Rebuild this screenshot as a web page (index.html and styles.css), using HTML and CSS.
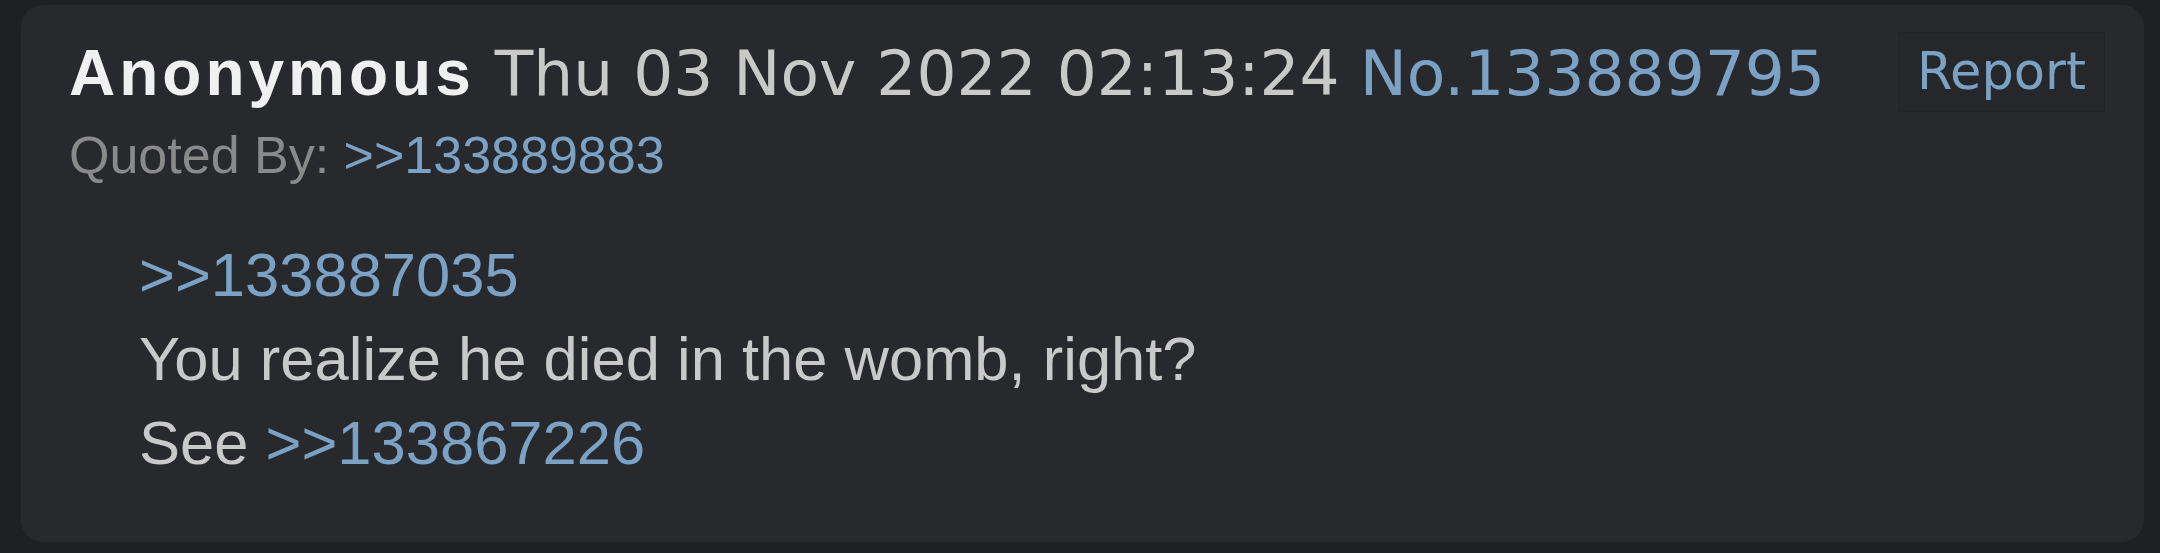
FILE: index.html
```html
<!DOCTYPE html>
<html lang="en">
<head>
  <meta charset="UTF-8">
  <meta name="viewport" content="width=device-width, initial-scale=1.0">
  <link rel="stylesheet" href="styles.css">
  <title>Post No.133889795</title>
</head>
<body>
  <div class="post">
    <div class="post-header">
      <div class="post-info">
        <span class="name">Anonymous</span>
        <span class="date">Thu 03 Nov 2022 02:13:24</span>
        <a class="post-no" href="#p133889795">No.133889795</a>
      </div>
      <a class="report" href="#report">Report</a>
    </div>
    <div class="backlinks">
      Quoted By: <a class="quotelink" href="#p133889883">&gt;&gt;133889883</a>
    </div>
    <blockquote class="post-body">
      <a class="quotelink" href="#p133887035">&gt;&gt;133887035</a><br>
      You realize he died in the womb, right?<br>
      See <a class="quotelink" href="#p133867226">&gt;&gt;133867226</a>
    </blockquote>
  </div>
</body>
</html>
```

FILE: styles.css
```css
html {
  background: #1f2022;
}
body {
  margin: 0;
  padding: 5px 16px 11px 21px;
  background: #1f2022;
  font-family: 'Liberation Sans', Arial, sans-serif;
  color: #c8c8c8;
}
a {
  color: #7ba2c4;
  text-decoration: none;
}
.post {
  background: #28292d;
  border-radius: 22px;
  height: 537px;
  box-sizing: border-box;
  padding: 31px 39px 0 48px;
}
.post-header {
  display: flex;
  justify-content: space-between;
  align-items: flex-start;
}
.post-info {
  font-family: 'DejaVu Sans', Verdana, sans-serif;
  font-size: 63px;
  line-height: 74px;
  white-space: nowrap;
}
.name {
  font-family: 'Liberation Sans', Arial, sans-serif;
  font-weight: bold;
  font-size: 64px;
  letter-spacing: 4px;
  color: #f0f0f0;
}
.date {
  color: #c9cac8;
}
.report {
  font-family: 'DejaVu Sans', Verdana, sans-serif;
  font-size: 51px;
  line-height: 57px;
  padding: 10px 18px 11px 18px;
  margin-top: -4px;
  background: #26272a;
  border: 1px solid #222326;
}
.backlinks {
  font-size: 52px;
  line-height: 62px;
  margin-top: 12px;
  color: #8a8a8a;
}
.post-body {
  margin: 47px 0 0 70px;
  font-size: 61.5px;
  line-height: 84px;
  color: #c9c9c9;
}
```
